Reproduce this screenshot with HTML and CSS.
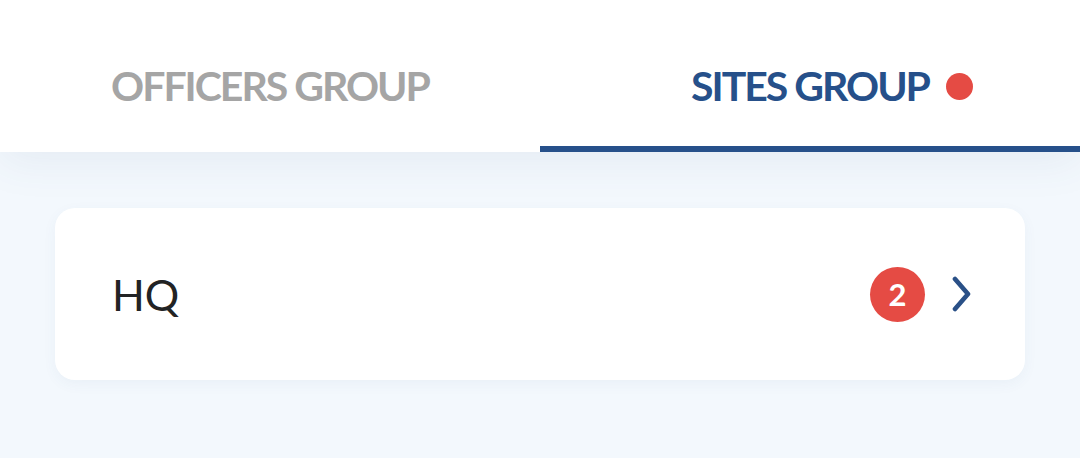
FILE: index.html
```html
<!DOCTYPE html>
<html>
<head>
<meta charset="utf-8">
<link rel="stylesheet" href="styles.css">
</head>
<body>
<div class="page">
  <nav class="tabs">
    <div class="tab">
      <span class="tab-label">OFFICERS GROUP</span>
    </div>
    <div class="tab active">
      <span class="tab-label">SITES GROUP<span class="dot"></span></span>
    </div>
  </nav>
  <main class="content">
    <div class="card">
      <span class="card-title">HQ</span>
      <div class="card-right">
        <span class="badge">2</span>
        <svg class="chevron" width="22" height="36" viewBox="0 0 22 36">
          <path d="M4 3 L17 18 L4 33" fill="none" stroke="#2a5087" stroke-width="4.6" stroke-linecap="round" stroke-linejoin="round"/>
        </svg>
      </div>
    </div>
  </main>
</div>
</body>
</html>
```
FILE: styles.css
```css
* { box-sizing: border-box; }
html, body { margin: 0; padding: 0; }
body {
  width: 1080px;
  height: 458px;
  overflow: hidden;
  background: #f3f8fd;
  font-family: Lato, "Noto Sans", sans-serif;
}
.page {
  display: flex;
  flex-direction: column;
  height: 458px;
}
.tabs {
  display: flex;
  height: 152px;
  background: #ffffff;
  box-shadow: 0 10px 40px rgba(60, 90, 130, 0.08);
  position: relative;
  z-index: 1;
}
.tab {
  flex: 1;
  display: flex;
  justify-content: center;
  padding-top: 65px;
  border-bottom: 6px solid transparent;
}
.tab.active {
  border-bottom-color: #26508a;
}
.tab-label {
  position: relative;
  font-size: 41px;
  line-height: 42px;
  font-weight: 700;
  color: #a5a5a5;
  letter-spacing: -2px;
  height: 42px;
}
.tab.active .tab-label {
  color: #26508a;
}
.dot {
  position: absolute;
  left: calc(100% + 17px);
  top: 8px;
  width: 27px;
  height: 27px;
  border-radius: 50%;
  background: #e54b44;
}
.content {
  flex: 1;
  padding: 56px 55px 0 55px;
}
.card {
  height: 172px;
  background: #ffffff;
  border-radius: 20px;
  box-shadow: 0 4px 14px rgba(60, 90, 130, 0.05);
  display: flex;
  align-items: center;
  justify-content: space-between;
  padding: 0 52px 0 57px;
}
.card-title {
  font-size: 43px;
  line-height: 43px;
  font-weight: 400;
  color: #222324;
}
.card-right {
  display: flex;
  align-items: center;
  gap: 26px;
}
.badge {
  width: 55px;
  height: 55px;
  border-radius: 50%;
  background: #e54b44;
  color: #ffffff;
  font-size: 31px;
  font-weight: 700;
  display: flex;
  align-items: center;
  justify-content: center;
  line-height: 1;
}
.chevron {
  display: block;
}
```
